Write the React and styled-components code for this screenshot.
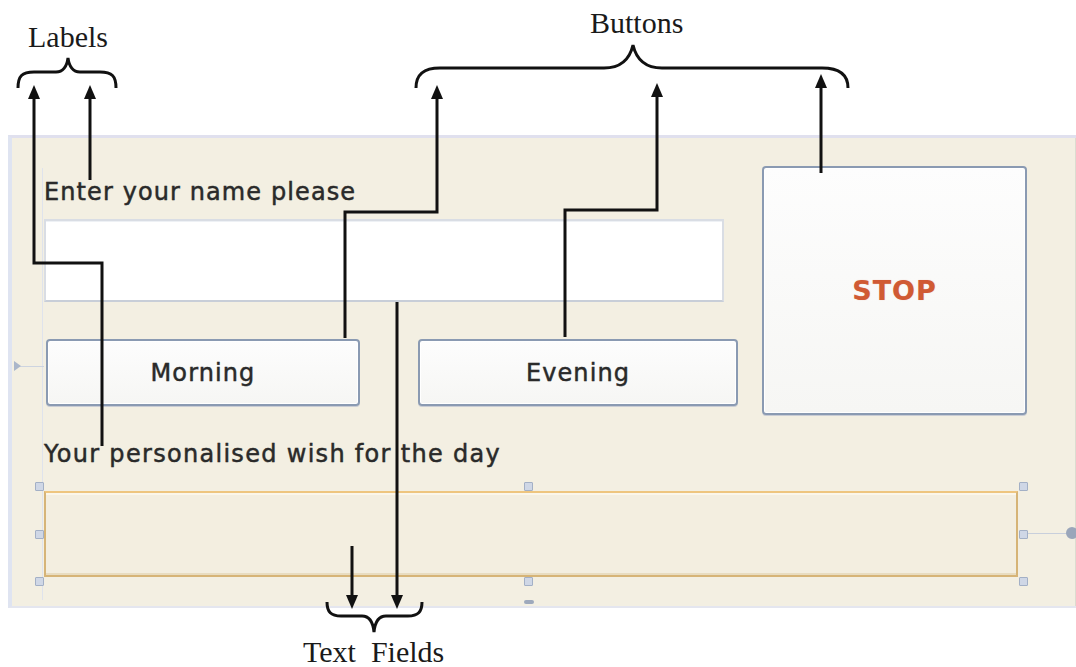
import React from 'react'
import styled, { createGlobalStyle } from 'styled-components'

const GlobalStyle = createGlobalStyle`
  html, body {
    margin: 0;
    padding: 0;
    background: #fff;
  }
`

const Page = styled.div`
  position: relative;
  width: 1076px;
  height: 667px;
  overflow: hidden;
  background: #fff;
  font-family: "DejaVu Sans", Verdana, sans-serif;
`

// the designer form that the notes point at
const Panel = styled.div`
  position: relative;
  box-sizing: border-box;
  margin: 135px 0 0 8px;
  width: 1068px;
  height: 473px;
  padding: 28px 0 0 32px;
  background: #f3efe2;
  border-top: 3px solid #e0e0ee;
  border-left: 4px solid #dfe4f1;
  border-bottom: 2px solid #e4e6ef;
  box-shadow: inset -9px 0 0 -8px #dcdcd0;
`

const Guide = styled.div`
  position: absolute;
  left: 30px;
  top: 30px;
  bottom: 6px;
  width: 1px;
  background: #dfe3ec;
`

const TopRow = styled.div`
  display: flex;
  align-items: flex-start;
`

const LeftCol = styled.div`
  width: 694px;
  margin-top: 13px;
  display: flex;
  flex-direction: column;
  align-items: flex-start;
`

const Label = styled.div`
  font-size: 24px;
  line-height: 27px;
  letter-spacing: ${p => p.$spacing || 1.1}px;
  color: #2a2a2a;
  -webkit-text-stroke: 0.35px #2a2a2a;
  text-shadow: 0 0 1px rgba(0, 0, 0, 0.3);
  margin-top: ${p => p.$top || 0}px;
  white-space: nowrap;
`

const NameInput = styled.div`
  box-sizing: border-box;
  margin-top: 13px;
  width: 680px;
  height: 83px;
  background: #fff;
  border: 2px solid #d9dde4;
  border-bottom-color: #c8ced8;
  box-shadow: inset 0 1px 0 #eef1f5;
`

const ButtonRow = styled.div`
  display: flex;
  gap: 58px;
  margin: 37px 0 0 2px;
`

const FormButton = styled.div`
  box-sizing: border-box;
  width: ${p => p.$w}px;
  height: ${p => p.$h}px;
  margin-left: ${p => p.$left || 0}px;
  display: flex;
  align-items: center;
  justify-content: center;
  background: linear-gradient(#fdfdfd, #f6f6f4);
  border: 2px solid #8a9ab2;
  border-radius: 4px;
  box-shadow: inset 0 0 0 1px #fff, 0 1px 0 #c9ccd4;
  font-size: ${p => p.$size || 24}px;
  font-weight: ${p => (p.$stop ? 'bold' : 'normal')};
  letter-spacing: ${p => (p.$stop ? 1 : 1.1)}px;
  color: ${p => (p.$stop ? '#d05a34' : '#2a2a2a')};
  -webkit-text-stroke: ${p => (p.$stop ? '0' : '0.35px #2a2a2a')};
  text-shadow: 0 0 1px ${p => (p.$stop ? 'rgba(208,90,52,0.4)' : 'rgba(0,0,0,0.3)')};
`

const WishWrap = styled.div`
  position: relative;
  margin-top: 23px;
  width: 974px;
  height: 86px;
`

const WishField = styled.div`
  box-sizing: border-box;
  width: 100%;
  height: 100%;
  background: #f3eee0;
  border: 2px solid #d6b477;
  border-top-color: #eec57f;
  box-shadow: inset 0 4px 0 -2px #fbf6ea, inset 0 -2px 0 #e8dcc0;
`

const Handle = styled.span`
  position: absolute;
  left: ${p => p.$x}px;
  top: ${p => p.$y}px;
  width: 7px;
  height: 7px;
  background: #cfd7e6;
  border: 1px solid #a3b0c6;
  border-radius: 1px;
`

const Connector = styled.span`
  position: absolute;
  left: 984px;
  top: 42px;
  width: 44px;
  height: 1px;
  background: #c8cfdc;

  &:after {
    content: '';
    position: absolute;
    right: -6px;
    top: -6px;
    width: 12px;
    height: 12px;
    border-radius: 50%;
    background: #9aa6ba;
  }
`

const SideAnchor = styled.span`
  position: absolute;
  left: 2px;
  top: 228px;
  width: 30px;
  height: 1px;
  background: #cdd4e0;

  &:before {
    content: '';
    position: absolute;
    left: 0;
    top: -5px;
    border-left: 7px solid #aab6ca;
    border-top: 5px solid transparent;
    border-bottom: 5px solid transparent;
  }
`

const BottomMark = styled.span`
  position: absolute;
  left: 512px;
  bottom: 2px;
  width: 10px;
  height: 4px;
  border-radius: 2px;
  background: #9ea9bc;
`

// annotation layer
const Notes = styled.svg`
  position: absolute;
  left: 0;
  top: 0;
  pointer-events: none;
`

const Callout = styled.div`
  position: absolute;
  left: ${p => p.$x}px;
  top: ${p => p.$y}px;
  font-family: "Liberation Serif", "Times New Roman", serif;
  font-size: 30px;
  line-height: 30px;
  color: #1a1a1a;
  white-space: pre;
`

const Up = ({ x, y }) => <polygon points={`${x},${y} ${x - 6},${y + 14} ${x + 6},${y + 14}`} fill="#111" />
const Down = ({ x, y }) => <polygon points={`${x},${y} ${x - 6},${y - 14} ${x + 6},${y - 14}`} fill="#111" />

const Annotations = () => (
  <Notes width="1076" height="667" viewBox="0 0 1076 667">
    <g fill="none" stroke="#111" strokeWidth="3" strokeLinejoin="miter">
      <path d="M18,88 C18,76 22,72 34,72 L56,72 C63,72 67,66 68,58 C69,66 73,72 80,72 L100,72 C112,72 116,76 116,88" />
      <path d="M416,88 C416,74 424,68 440,68 L604,68 C622,68 630,58 633,45 C636,58 644,68 662,68 L822,68 C838,68 848,74 848,88" />
      <path d="M327,602 C327,612 331,616 341,616 L362,616 C369,616 373,622 374,632 C375,622 379,616 386,616 L408,616 C418,616 422,612 422,602" />
      <path d="M34,97 V263 H102 V446" />
      <path d="M90,97 V180" />
      <path d="M437,97 V212 H345 V338" />
      <path d="M657,95 V210 H565 V337" />
      <path d="M821,86 V173" />
      <path d="M352,546 V596" />
      <path d="M397,302 V596" />
    </g>
    <Up x={34} y={85} />
    <Up x={90} y={85} />
    <Up x={437} y={85} />
    <Up x={657} y={83} />
    <Up x={821} y={74} />
    <Down x={352} y={609} />
    <Down x={397} y={609} />
  </Notes>
)

const handles = [
  [-9, -9], [480, -9], [975, -9],
  [-9, 39], [975, 39],
  [-9, 86], [480, 86], [975, 86],
]

export default function App() {
  return (
    <Page>
      <GlobalStyle />
      <Panel>
        <Guide />
        <SideAnchor />
        <TopRow>
          <LeftCol>
            <Label>Enter your name please</Label>
            <NameInput />
            <ButtonRow>
              <FormButton $w={314} $h={67}>Morning</FormButton>
              <FormButton $w={320} $h={67}>Evening</FormButton>
            </ButtonRow>
          </LeftCol>
          <FormButton $w={265} $h={249} $left={24} $size={27} $stop>STOP</FormButton>
        </TopRow>
        <Label $top={26} $spacing={1.3}>Your personalised wish for the day</Label>
        <WishWrap>
          <WishField />
          {handles.map(([x, y], i) => (
            <Handle key={i} $x={x} $y={y} />
          ))}
          <Connector />
        </WishWrap>
        <BottomMark />
      </Panel>
      <Annotations />
      <Callout $x={28} $y={22}>Labels</Callout>
      <Callout $x={590} $y={8}>Buttons</Callout>
      <Callout $x={303} $y={637}>{'Text  Fields'}</Callout>
    </Page>
  )
}
